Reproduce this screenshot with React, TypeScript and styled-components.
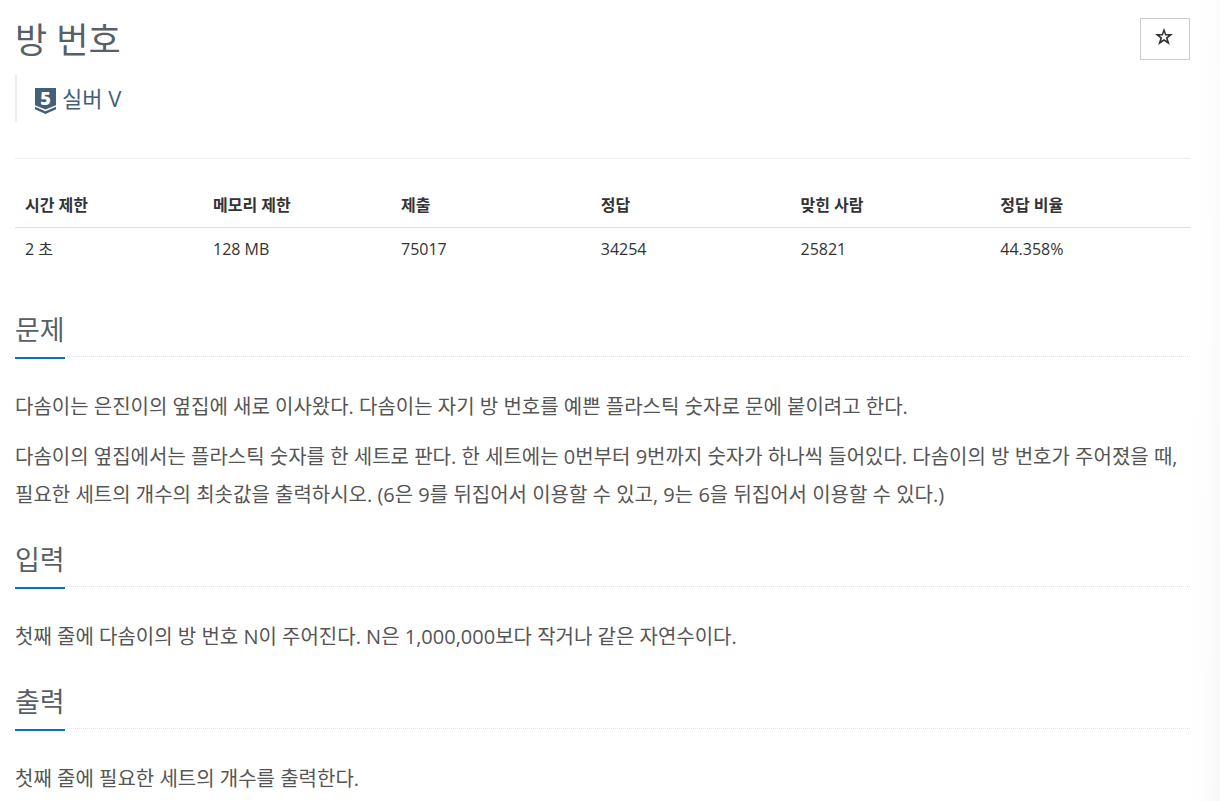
import React from "react";
import styled, { createGlobalStyle } from "styled-components";

const GlobalStyle = createGlobalStyle`
  * { box-sizing: border-box; }
  body {
    margin: 0;
    background: #fff;
    color: #333;
    font-family: "Open Sans", "Noto Sans CJK KR", sans-serif;
    font-size: 16px;
    line-height: 24px;
  }
`;

const Page = styled.main`
  min-height: 100vh;
  padding: 14px 30px 0 15px;
  background: linear-gradient(271deg, #f7f7f7, #fdfdfd 16px, #fff 36px);
`;

const Header = styled.header`
  display: flex;
  justify-content: space-between;
  align-items: flex-start;
  padding-bottom: 36px;
  border-bottom: 1px solid #eee;
`;

const Title = styled.h1`
  margin: 0 0 9px;
  font-size: 35px;
  line-height: 52px;
  font-weight: 400;
  color: #585f69;
`;

const Tier = styled.blockquote`
  display: flex;
  align-items: center;
  gap: 6px;
  margin: 0;
  height: 47px;
  padding-left: 18px;
  border-left: 2px solid #eee;
  font-size: 22px;
  line-height: 47px;
  color: #435f7a;
`;

const BadgeIcon = styled.svg`
  display: block;
  margin-top: 5px;
`;

const FavoriteButton = styled.button`
  display: flex;
  align-items: center;
  justify-content: center;
  width: 50px;
  height: 42px;
  margin-top: 4px;
  padding: 0 2px 5px 0;
  border: 1px solid #ccc;
  background: #fff;
  color: #333;
`;

const InfoTable = styled.table`
  width: 100%;
  margin: 23px 0 42px;
  border-collapse: collapse;
  table-layout: fixed;
`;

const HeadCell = styled.th<{ $width: number }>`
  width: ${(p) => p.$width}%;
  padding: 11px 10px 10px;
  border-bottom: 1px solid #ddd;
  font-size: 16px;
  font-weight: 700;
  text-align: left;
`;

const Cell = styled.td`
  padding: 9px 10px;
`;

const Section = styled.section`
  margin-top: 28px;
`;

const SectionHead = styled.div`
  border-bottom: 1px dotted #e0e3e8;
`;

const SectionTitle = styled.h2`
  display: inline-block;
  margin: 0 0 -3px;
  padding-bottom: 9px;
  border-bottom: 2px solid #0076c0;
  background: #fff;
  font-size: 27px;
  line-height: 36px;
  font-weight: 400;
  color: #585f69;
  vertical-align: top;
`;

const Body = styled.div`
  padding-top: 31px;
`;

const Paragraph = styled.p`
  margin: 0 0 12px;
  font-size: 20px;
  line-height: 38px;
  color: #555;
`;

const columns = [
  { label: "시간 제한", value: "2 초", width: 16 },
  { label: "메모리 제한", value: "128 MB", width: 16 },
  { label: "제출", value: "75017", width: 17 },
  { label: "정답", value: "34254", width: 17 },
  { label: "맞힌 사람", value: "25821", width: 17 },
  { label: "정답 비율", value: "44.358%", width: 17 },
];

const sections = [
  {
    title: "문제",
    paragraphs: [
      "다솜이는 은진이의 옆집에 새로 이사왔다. 다솜이는 자기 방 번호를 예쁜 플라스틱 숫자로 문에 붙이려고 한다.",
      "다솜이의 옆집에서는 플라스틱 숫자를 한 세트로 판다. 한 세트에는 0번부터 9번까지 숫자가 하나씩 들어있다. 다솜이의 방 번호가 주어졌을 때, 필요한 세트의 개수의 최솟값을 출력하시오. (6은 9를 뒤집어서 이용할 수 있고, 9는 6을 뒤집어서 이용할 수 있다.)",
    ],
  },
  {
    title: "입력",
    paragraphs: ["첫째 줄에 다솜이의 방 번호 N이 주어진다. N은 1,000,000보다 작거나 같은 자연수이다."],
  },
  { title: "출력", paragraphs: ["첫째 줄에 필요한 세트의 개수를 출력한다."] },
];

const TierBadge = () => (
  <BadgeIcon width="21" height="34" viewBox="0 -4 21 34" aria-hidden="true">
    <path d="M0 0H21V17.300L10.500 21.600L0 17.300Z" fill="#435f7a" />
    <path d="M0 18.700L10.500 23.200L21 18.700V21.200L10.500 26L0 21.200Z" fill="#435f7a" />
    <text x="10.500" y="17" textAnchor="middle" fontFamily="Open Sans" fontWeight="800" fontSize="18" fill="#fff">5</text>
  </BadgeIcon>
);

const Star = () => (
  <svg width="18" height="17" viewBox="0 0 18 17" aria-hidden="true">
    <path
      d="M9 0L11.200 6L18 6L12.700 10.200L14.800 17L9 13L3.200 17L5.300 10.200L0 6L6.800 6ZM9 4.300L7.900 7.600L4.600 7.600L7.200 9.700L6.200 12.800L9 10.900L11.800 12.800L10.800 9.700L13.400 7.600L10.100 7.600Z"
      fill="currentColor"
      fillRule="evenodd"
    />
  </svg>
);

export default function App() {
  return (
    <>
      <GlobalStyle />
      <Page>
        <Header>
          <div>
            <Title>방 번호</Title>
            <Tier><TierBadge />실버 V</Tier>
          </div>
          <FavoriteButton type="button" aria-label="즐겨찾기"><Star /></FavoriteButton>
        </Header>
        <InfoTable>
          <thead>
            <tr>{columns.map((c) => <HeadCell key={c.label} scope="col" $width={c.width}>{c.label}</HeadCell>)}</tr>
          </thead>
          <tbody>
            <tr>{columns.map((c) => <Cell key={c.label}>{c.value}</Cell>)}</tr>
          </tbody>
        </InfoTable>
        {sections.map((s) => (
          <Section key={s.title}>
            <SectionHead><SectionTitle>{s.title}</SectionTitle></SectionHead>
            <Body>{s.paragraphs.map((p) => <Paragraph key={p}>{p}</Paragraph>)}</Body>
          </Section>
        ))}
      </Page>
    </>
  );
}
